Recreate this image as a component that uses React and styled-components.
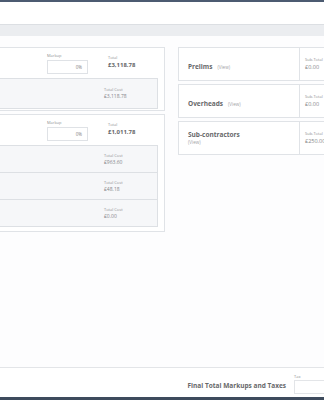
import React from "react";
import styled, { createGlobalStyle } from "styled-components";

const Global = createGlobalStyle`
  html, body { margin: 0; padding: 0; background: #fff; overflow: hidden; }
  body { font-family: "Open Sans", "Liberation Sans", sans-serif; color: #555; }
  * { box-sizing: border-box; }
`;

const Page = styled.div`
  width: 324px;
  height: 400px;
  display: flex;
  flex-direction: column;
  overflow: hidden;
  background: #fff;
`;

const TopStrip = styled.div`
  height: 2px;
  background: #4c5b71;
  flex: none;
`;

const Header = styled.div`
  height: 22px;
  flex: none;
  background: #fff;
`;

const SubBar = styled.div`
  height: 12px;
  flex: none;
  background: #ebedf0;
  border-top: 1px solid #dcdfe3;
`;

const Content = styled.div`
  flex: 1;
  display: flex;
  align-items: flex-start;
  gap: 13px;
  padding-top: 11px;
  margin-left: -24px;
  background: #fdfdfe;
`;

const LeftCol = styled.div`
  width: 189px;
  flex: none;
  display: flex;
  flex-direction: column;
  gap: 3px;
`;

const RightCol = styled.div`
  width: 180px;
  flex: none;
  display: flex;
  flex-direction: column;
  gap: 3px;
`;

const Card = styled.div`
  background: #fff;
  border: 1px solid #e0e3e7;
  padding: 0 6px ${(p) => p.pb}px 0;
  display: flex;
  flex-direction: column;
`;

const CardHead = styled.div`
  height: 30px;
  display: flex;
  align-items: flex-start;
  padding-left: 70px;
`;

const MarkupBlock = styled.div`
  width: 61px;
  padding-top: 5px;
  display: flex;
  flex-direction: column;
`;

const Tiny = styled.div`
  font-size: 4px;
  line-height: 5px;
  color: #909194;
  white-space: nowrap;
`;

const MarkupInput = styled.div`
  margin-top: 2px;
  width: 41px;
  height: 14px;
  border: 1px solid #dfe2e6;
  background: #fff;
  font-size: 4.5px;
  color: #808184;
  display: flex;
  align-items: center;
  justify-content: flex-end;
  padding-right: 5px;
`;

const TotalBlock = styled.div`
  padding-top: 7px;
  display: flex;
  flex-direction: column;
`;

const TotalValue = styled.div`
  font-size: 6px;
  line-height: 8px;
  font-weight: 700;
  color: #67686a;
  margin-top: 1px;
`;

const Rows = styled.div`
  display: flex;
  flex-direction: column;
  border: 1px solid #dde0e4;
  border-left: none;
`;

const Row = styled.div`
  height: ${(p) => p.h}px;
  background: #f6f7f9;
  border-top: ${(p) => (p.first ? "none" : "1px solid #dde0e4")};
  padding: ${(p) => p.pt}px 0 0 127px;
  display: flex;
  flex-direction: column;
`;

const RowValue = styled.div`
  font-size: 5px;
  line-height: 7px;
  color: #858689;
  margin-top: 1px;
`;

const SideCard = styled.div`
  height: 34px;
  background: #fff;
  border: 1px solid #e0e3e7;
  display: flex;
`;

const SideMain = styled.div`
  width: 121px;
  border-right: 1px solid #e0e3e7;
  display: flex;
  flex-direction: column;
  justify-content: flex-end;
  padding: 0 0 9px 9px;
`;

const SideTitle = styled.div`
  font-size: 6.5px;
  line-height: 8px;
  font-weight: 700;
  color: #67686a;
  display: flex;
  align-items: baseline;
  gap: 5px;
  white-space: nowrap;
`;

const ViewLink = styled.span`
  font-size: 4.5px;
  line-height: 6px;
  font-weight: 400;
  color: #a0a1a4;
`;

const SideSub = styled.div`
  padding: 9px 0 0 5px;
  display: flex;
  flex-direction: column;
`;

const SideValue = styled.div`
  font-size: 5.5px;
  line-height: 7px;
  color: #858689;
  margin-top: 2px;
  white-space: nowrap;
`;

const Footer = styled.div`
  height: 30px;
  flex: none;
  border-top: 1px solid #e3e5e8;
  background: #fff;
  display: flex;
  align-items: flex-start;
  justify-content: flex-end;
  gap: 8px;
  margin-right: -30px;
`;

const FooterTitle = styled.div`
  font-size: 6.5px;
  font-weight: 700;
  color: #67686a;
  padding-top: 13px;
  white-space: nowrap;
`;

const TaxBlock = styled.div`
  width: 60px;
  padding-top: 6px;
  display: flex;
  flex-direction: column;
`;

const TaxInput = styled.div`
  margin-top: 1px;
  height: 14px;
  border: 1px solid #e3e5e8;
  background: #fff;
`;

const BottomStrip = styled.div`
  height: 3px;
  flex: none;
  background: #3e4b5d;
`;

function Section({ total, rows, pb }) {
  return (
    <Card pb={pb}>
      <CardHead>
        <MarkupBlock>
          <Tiny>Markup</Tiny>
          <MarkupInput>0%</MarkupInput>
        </MarkupBlock>
        <TotalBlock>
          <Tiny>Total</Tiny>
          <TotalValue>{total}</TotalValue>
        </TotalBlock>
      </CardHead>
      <Rows>
        {rows.map((r, i) => (
          <Row key={i} first={i === 0} h={r.h} pt={r.pt}>
            <Tiny>Total Cost</Tiny>
            <RowValue>{r.v}</RowValue>
          </Row>
        ))}
      </Rows>
    </Card>
  );
}

const side = [
  { t: "Prelims", v: "£0.00", wrap: false },
  { t: "Overheads", v: "£0.00", wrap: false },
  { t: "Sub-contractors", v: "£250.00", wrap: true },
];

export default function App() {
  return (
    <Page>
      <Global />
      <TopStrip />
      <Header />
      <SubBar />
      <Content>
        <LeftCol>
          <Section pb={1} total="£3,118.78" rows={[{ v: "£3,118.78", h: 29, pt: 8 }]} />
          <Section
            pb={4}
            total="£1,011.78"
            rows={[
              { v: "£963.60", h: 26, pt: 7 },
              { v: "£48.18", h: 27, pt: 7 },
              { v: "£0.00", h: 27, pt: 7 },
            ]}
          />
        </LeftCol>
        <RightCol>
          {side.map((s) => (
            <SideCard key={s.t}>
              <SideMain>
                {s.wrap ? (
                  <>
                    <SideTitle>{s.t}</SideTitle>
                    <ViewLink>(View)</ViewLink>
                  </>
                ) : (
                  <SideTitle>
                    {s.t}
                    <ViewLink>(View)</ViewLink>
                  </SideTitle>
                )}
              </SideMain>
              <SideSub>
                <Tiny>Sub-Total</Tiny>
                <SideValue>{s.v}</SideValue>
              </SideSub>
            </SideCard>
          ))}
        </RightCol>
      </Content>
      <Footer>
        <FooterTitle>Final Total Markups and Taxes</FooterTitle>
        <TaxBlock>
          <Tiny>Tax</Tiny>
          <TaxInput />
        </TaxBlock>
      </Footer>
      <BottomStrip />
    </Page>
  );
}
